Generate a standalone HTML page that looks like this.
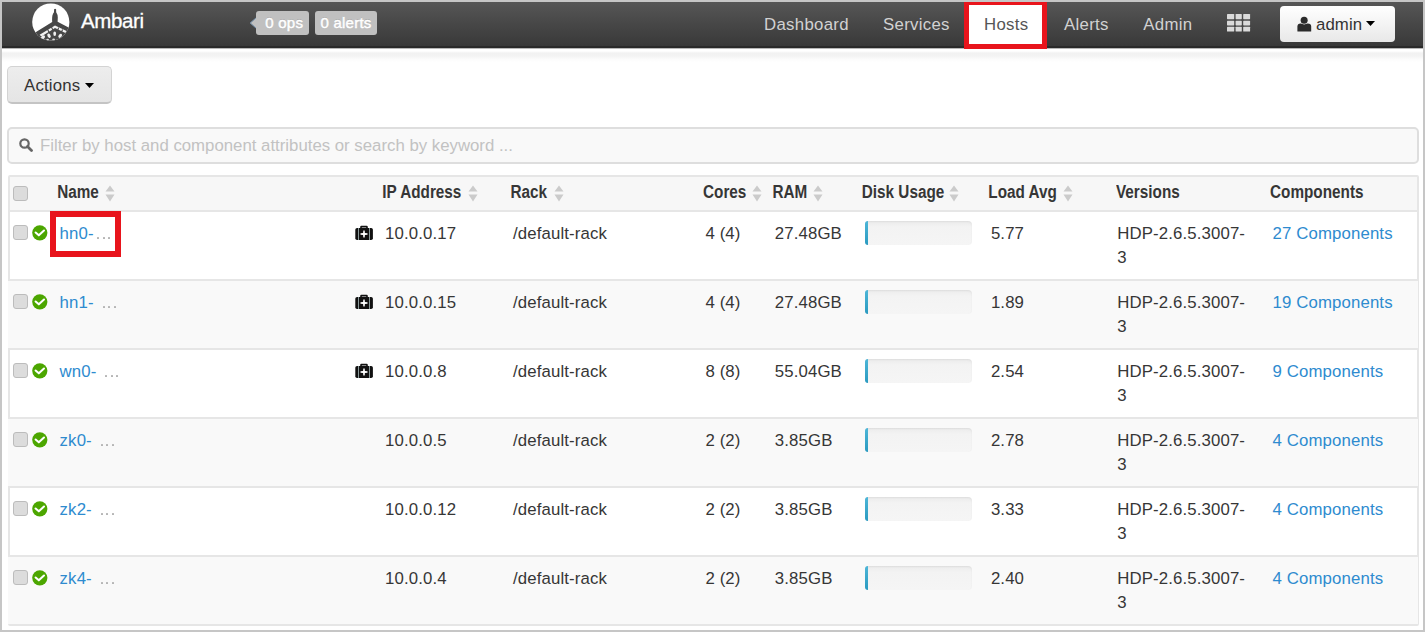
<!DOCTYPE html>
<html><head><meta charset="utf-8">
<style>
*{box-sizing:border-box;margin:0;padding:0}
html,body{width:1425px;height:632px;overflow:hidden;background:#c6c6c6;font-family:"Liberation Sans",sans-serif;}
.pg{position:absolute;left:2px;top:2px;width:1421px;height:628px;background:#fff;overflow:hidden}
.a{position:absolute;white-space:nowrap}
.nav{position:absolute;left:0;top:0;width:1421px;height:46px;background:linear-gradient(#565656,#474747 50%,#393939);border-bottom:2px solid #2a2a2a}
.shade{position:absolute;left:0;top:46px;width:1421px;height:14px;background:linear-gradient(#b8b8b8 0 1px,#fff 1px 3px,#f2f2f2 5px,#f3f3f3 8px,#fbfbfb 11px,#fff 14px)}
.navt{font-size:16.8px;color:#d2d2d2;top:13px;line-height:20px;letter-spacing:0.3px}
.badge{position:absolute;top:9px;height:24px;background:#c0c0c0;border-radius:3px;color:#fff;font-size:15px;line-height:24px;letter-spacing:0.25px;text-align:center;text-shadow:0 -1px 0 rgba(0,0,0,.15);-webkit-text-stroke:0.45px #fff}
.btn{position:absolute;border-radius:4px}
.hd{font-size:15.3px;font-weight:bold;color:#363636;top:181.8px;line-height:18px;transform:scaleY(1.14);transform-origin:0 14.06px}
.sort{position:absolute;width:10px;height:17px}
.row{position:absolute;left:6px;width:1410px;height:69px;border-top:2px solid #e6e6e6}
.row.odd{background:#f9f9f9}
.c{position:absolute;white-space:nowrap;font-size:16.8px;color:#363636;line-height:24px;top:10px;letter-spacing:0.13px}
.lnk{color:#2e8bcf}
.dot{position:absolute;top:25.4px;width:2px;height:2px;background:#b4b4b4;border-radius:0.5px}
.cb{position:absolute;left:5.2px;top:13.4px;width:15px;height:15px;border:1.5px solid #bcbcbc;background:#dcdcdc;border-radius:3px}
.ok{position:absolute;left:24.2px;top:13.2px;width:15.6px;height:15.6px}
.bar{position:absolute;left:857px;top:9px;width:107px;height:24px;border-radius:4px;background:linear-gradient(#ebebeb,#f3f3f3 25%,#f5f5f5);box-shadow:inset 0 1px 2px rgba(0,0,0,.06)}
.bar i{position:absolute;left:0;top:0;width:3.2px;height:24px;border-radius:3px 0 0 3px;background:linear-gradient(#4db6d8,#2a9ac0)}
.med{position:absolute;left:346.8px;top:13px;width:18px;height:16px}
</style></head><body>
<div class="pg">
  <div class="nav"></div>
  <div class="shade"></div>
  <!-- logo -->
  <svg class="a" style="left:26px;top:-2px" width="46" height="44" viewBox="0 0 46 44">
    <defs><clipPath id="cc"><circle cx="22.8" cy="22" r="18.6"/></clipPath></defs>
    <g clip-path="url(#cc)">
      <rect x="0" y="0" width="46" height="44" fill="#fff"/>
      <path d="M26.1 9.2 Q27.1 8.4 28.1 9.2 L28.2 12.2 Q29.7 14.2 29.8 17.6 L29.6 21.8 L46 30.3 L46 44 L0 44 L0 37 L24.2 21.9 Q23.9 18 24.4 15.4 Q25.1 13.2 26 12.2 Z" fill="#474747"/>
      <path d="M27 25.4 L38.6 31 L37.4 33 L27 28 L13.4 36.6 L11.6 34.8 Z" fill="#f2f2f2"/>
      <path d="M19.5 29.2 L21.2 32.6 M23.4 27 L25 30.3 M30.6 27.6 L29.6 30.6 M34.6 29.6 L33.4 32.2" stroke="#474747" stroke-width="1.1"/>
      <ellipse cx="15" cy="37.4" rx="1.5" ry="2.5" transform="rotate(45 15 37.4)" fill="#f0f0f0"/>
      <ellipse cx="21" cy="35.8" rx="1.5" ry="2.3" transform="rotate(-30 21 35.8)" fill="#f0f0f0"/>
      <ellipse cx="26.7" cy="33.8" rx="1.4" ry="2.3" fill="#f0f0f0"/>
      <ellipse cx="32.2" cy="35.8" rx="1.5" ry="2.3" transform="rotate(40 32.2 35.8)" fill="#f0f0f0"/>
      <ellipse cx="19.6" cy="39.8" rx="1.4" ry="1" fill="#dcdcdc"/>
      <ellipse cx="25.6" cy="39.4" rx="1.4" ry="1" fill="#dcdcdc"/>
    </g>
  </svg>
  <div class="a" style="left:79px;top:7px;font-size:20.5px;letter-spacing:-0.4px;color:#fff;line-height:24px;-webkit-text-stroke:0.3px #fff">Ambari</div>
  <svg class="a" style="left:247px;top:15px" width="8" height="12" viewBox="0 0 8 12"><path d="M8 0 L1.5 6 L8 12Z" fill="#c0c0c0"/><path d="M7.5 0.5 L1.2 6 L7.5 11.5" fill="none" stroke="#7d9ab5" stroke-width="1"/></svg><div class="badge" style="left:254px;width:53px;padding-left:3.5px">0 ops</div>
  <div class="badge" style="left:313px;width:62px">0 alerts</div>

  <div class="a navt" style="left:762px">Dashboard</div>
  <div class="a navt" style="left:881px">Services</div>
  <div class="a" style="left:962px;top:0;width:83px;height:47px;border:5px solid #e8141c;border-top-width:3px;background:#fff"></div>
  <div class="a navt" style="left:982px;color:#555">Hosts</div>
  <div class="a navt" style="left:1062px">Alerts</div>
  <div class="a navt" style="left:1141.3px">Admin</div>
  <svg class="a" style="left:1225px;top:12px" width="24" height="18" viewBox="0 0 24 18">
    <g fill="#dadada">
      <rect x="0" y="0" width="7.2" height="5.2" rx="0.6"/><rect x="8.6" y="0" width="6.2" height="5.2" rx="0.6"/><rect x="16.2" y="0" width="6.9" height="5.2" rx="0.6"/>
      <rect x="0" y="6.8" width="7.2" height="4.6" rx="0.6"/><rect x="8.6" y="6.8" width="6.2" height="4.6" rx="0.6"/><rect x="16.2" y="6.8" width="6.9" height="4.6" rx="0.6"/>
      <rect x="0" y="12.7" width="7.2" height="4.8" rx="0.6"/><rect x="8.6" y="12.7" width="6.2" height="4.8" rx="0.6"/><rect x="16.2" y="12.7" width="6.9" height="4.8" rx="0.6"/>
    </g>
  </svg>
  <div class="btn" style="left:1278px;top:4px;width:115px;height:36px;background:linear-gradient(#fff,#e8e8e8);"></div>
  <svg class="a" style="left:1295px;top:14px" width="15" height="16" viewBox="0 0 15 16">
    <path d="M0.4 15.2 L0.4 10.6 Q0.4 7.6 3.6 7.6 L10.8 7.6 Q14.2 7.6 14.2 10.6 L14.2 15.2 Q14.2 15.6 13.6 15.6 L1 15.6 Q0.4 15.6 0.4 15.2 Z" fill="#2b2b2b"/>
    <circle cx="7.15" cy="4.3" r="4.1" fill="#f0f0f0"/><circle cx="7.15" cy="4.3" r="3.5" fill="#2b2b2b"/>
  </svg>
  <div class="a" style="left:1314px;top:13px;font-size:16.8px;color:#333;line-height:20px;letter-spacing:0.1px">admin</div>
  <svg class="a" style="left:1364px;top:19px" width="9" height="5" viewBox="0 0 9 5"><path d="M0 0H9L4.5 5Z" fill="#000"/></svg>

  <!-- actions -->
  <div class="btn" style="left:5.2px;top:64.4px;width:105px;height:37.6px;border:1.6px solid #d3d3d3;border-bottom:2px solid #c4c4c4;background:linear-gradient(#ededed,#e5e5e5);border-radius:5px"></div>
  <div class="a" style="left:22px;top:73.5px;font-size:16.8px;color:#333;line-height:20px;letter-spacing:0.2px">Actions</div>
  <svg class="a" style="left:83px;top:80.5px" width="9" height="5" viewBox="0 0 9 5"><path d="M0 0H9L4.5 5Z" fill="#000"/></svg>

  <!-- filter -->
  <div class="btn" style="left:5px;top:125px;width:1412px;height:37px;border:2px solid #dedede;background:#f9f9f9;border-radius:5px"></div>
  <svg class="a" style="left:17px;top:136px" width="14" height="14" viewBox="0 0 14 14">
    <circle cx="5.5" cy="5.5" r="4.2" fill="none" stroke="#666" stroke-width="2.2"/>
    <path d="M8.5 8.5 L12.5 12.5" stroke="#666" stroke-width="2.8" stroke-linecap="round"/>
  </svg>
  <div class="a" style="left:38px;top:134px;font-size:16.8px;color:#c2c2c2;line-height:20px">Filter by host and component attributes or search by keyword ...</div>

  <!-- table -->
  <div class="a" style="left:5.5px;top:173px;width:1411.5px;height:451px;border:2px solid #e6e6e6;border-radius:2px;background:#fff"></div>
  <div class="a" style="left:8px;top:175px;width:1407px;height:33px;background:#f7f7f7"></div>
  <div class="a" style="left:8px;top:208px;width:1407px;height:2px;background:#e6e6e6"></div>
  <div class="cb" style="left:11px;top:184px"></div>
  <div class="a hd" style="left:55.2px">Name</div>
  <div class="a hd" style="left:380.3px">IP Address</div>
  <div class="a hd" style="left:508.4px">Rack</div>
  <div class="a hd" style="left:701px">Cores</div>
  <div class="a hd" style="left:770.4px">RAM</div>
  <div class="a hd" style="left:859.8px">Disk Usage</div>
  <div class="a hd" style="left:986.3px">Load Avg</div>
  <div class="a hd" style="left:1114px">Versions</div>
  <div class="a hd" style="left:1268px">Components</div>
  <!-- sort icons -->
  <svg class="sort" style="left:103px;top:182.6px" viewBox="0 0 10 17"><path d="M5 0.5 L9.5 6.5 H0.5Z M5 16.5 L9.5 9.5 H0.5Z" fill="#cbcbcb"/></svg>
  <svg class="sort" style="left:465.7px;top:182.6px" viewBox="0 0 10 17"><path d="M5 0.5 L9.5 6.5 H0.5Z M5 16.5 L9.5 9.5 H0.5Z" fill="#cbcbcb"/></svg>
  <svg class="sort" style="left:551.6px;top:182.6px" viewBox="0 0 10 17"><path d="M5 0.5 L9.5 6.5 H0.5Z M5 16.5 L9.5 9.5 H0.5Z" fill="#cbcbcb"/></svg>
  <svg class="sort" style="left:749.7px;top:182.6px" viewBox="0 0 10 17"><path d="M5 0.5 L9.5 6.5 H0.5Z M5 16.5 L9.5 9.5 H0.5Z" fill="#cbcbcb"/></svg>
  <svg class="sort" style="left:811px;top:182.6px" viewBox="0 0 10 17"><path d="M5 0.5 L9.5 6.5 H0.5Z M5 16.5 L9.5 9.5 H0.5Z" fill="#cbcbcb"/></svg>
  <svg class="sort" style="left:947px;top:182.6px" viewBox="0 0 10 17"><path d="M5 0.5 L9.5 6.5 H0.5Z M5 16.5 L9.5 9.5 H0.5Z" fill="#cbcbcb"/></svg>
  <svg class="sort" style="left:1061px;top:182.6px" viewBox="0 0 10 17"><path d="M5 0.5 L9.5 6.5 H0.5Z M5 16.5 L9.5 9.5 H0.5Z" fill="#cbcbcb"/></svg>

  <div class="row" style="top:208px;border-top-color:transparent;"><div class="cb"></div><svg class="ok" viewBox="0 0 16 16"><circle cx="8" cy="8" r="7.8" fill="#4ca600"/><path d="M3.7 7.7 L7 10.6 L12.3 5.7" fill="none" stroke="#fff" stroke-width="2.1" stroke-linecap="round" stroke-linejoin="round"/></svg><div class="c lnk" style="left:51.6px">hn0-</div><i class="dot" style="left:89.2px"></i><i class="dot" style="left:94.6px"></i><i class="dot" style="left:100.0px"></i><svg class="med" viewBox="0 0 18 16"><path d="M5.2 3.2 V2 Q5.2 0.8 6.4 0.8 H11.6 Q12.8 0.8 12.8 2 V3.2 H11.2 V2.4 H6.8 V3.2 Z" fill="#111"/><rect x="0.3" y="3" width="17.6" height="12" rx="1.8" fill="#111"/><rect x="3.1" y="3" width="0.9" height="12" fill="#9aa"/><rect x="14" y="3" width="0.9" height="12" fill="#9aa"/><path d="M8.3 5.6 H9.7 L9.9 8.1 L12.5 8.3 V9.7 L9.9 9.9 L9.7 12.4 H8.3 L8.1 9.9 L5.5 9.7 V8.3 L8.1 8.1 Z" fill="#fff"/></svg><div class="c" style="left:377px">10.0.0.17</div><div class="c" style="left:505px">/default-rack</div><div class="c" style="left:697.4px">4 (4)</div><div class="c" style="left:766.8px">27.48GB</div><div class="bar"><i></i></div><div class="c" style="left:982.9px">5.77</div><div class="c" style="left:1109.2px">HDP-2.6.5.3007-<br>3</div><div class="c lnk" style="left:1264.5px">27 Components</div></div>
  <div class="row odd" style="top:277px;"><div class="cb"></div><svg class="ok" viewBox="0 0 16 16"><circle cx="8" cy="8" r="7.8" fill="#4ca600"/><path d="M3.7 7.7 L7 10.6 L12.3 5.7" fill="none" stroke="#fff" stroke-width="2.1" stroke-linecap="round" stroke-linejoin="round"/></svg><div class="c lnk" style="left:51.6px">hn1-</div><i class="dot" style="left:94.8px"></i><i class="dot" style="left:100.1px"></i><i class="dot" style="left:105.5px"></i><svg class="med" viewBox="0 0 18 16"><path d="M5.2 3.2 V2 Q5.2 0.8 6.4 0.8 H11.6 Q12.8 0.8 12.8 2 V3.2 H11.2 V2.4 H6.8 V3.2 Z" fill="#111"/><rect x="0.3" y="3" width="17.6" height="12" rx="1.8" fill="#111"/><rect x="3.1" y="3" width="0.9" height="12" fill="#9aa"/><rect x="14" y="3" width="0.9" height="12" fill="#9aa"/><path d="M8.3 5.6 H9.7 L9.9 8.1 L12.5 8.3 V9.7 L9.9 9.9 L9.7 12.4 H8.3 L8.1 9.9 L5.5 9.7 V8.3 L8.1 8.1 Z" fill="#fff"/></svg><div class="c" style="left:377px">10.0.0.15</div><div class="c" style="left:505px">/default-rack</div><div class="c" style="left:697.4px">4 (4)</div><div class="c" style="left:766.8px">27.48GB</div><div class="bar"><i></i></div><div class="c" style="left:982.9px">1.89</div><div class="c" style="left:1109.2px">HDP-2.6.5.3007-<br>3</div><div class="c lnk" style="left:1264.5px">19 Components</div></div>
  <div class="row" style="top:346px;"><div class="cb"></div><svg class="ok" viewBox="0 0 16 16"><circle cx="8" cy="8" r="7.8" fill="#4ca600"/><path d="M3.7 7.7 L7 10.6 L12.3 5.7" fill="none" stroke="#fff" stroke-width="2.1" stroke-linecap="round" stroke-linejoin="round"/></svg><div class="c lnk" style="left:51.6px">wn0-</div><i class="dot" style="left:97.3px"></i><i class="dot" style="left:102.8px"></i><i class="dot" style="left:108.3px"></i><svg class="med" viewBox="0 0 18 16"><path d="M5.2 3.2 V2 Q5.2 0.8 6.4 0.8 H11.6 Q12.8 0.8 12.8 2 V3.2 H11.2 V2.4 H6.8 V3.2 Z" fill="#111"/><rect x="0.3" y="3" width="17.6" height="12" rx="1.8" fill="#111"/><rect x="3.1" y="3" width="0.9" height="12" fill="#9aa"/><rect x="14" y="3" width="0.9" height="12" fill="#9aa"/><path d="M8.3 5.6 H9.7 L9.9 8.1 L12.5 8.3 V9.7 L9.9 9.9 L9.7 12.4 H8.3 L8.1 9.9 L5.5 9.7 V8.3 L8.1 8.1 Z" fill="#fff"/></svg><div class="c" style="left:377px">10.0.0.8</div><div class="c" style="left:505px">/default-rack</div><div class="c" style="left:697.4px">8 (8)</div><div class="c" style="left:766.8px">55.04GB</div><div class="bar"><i></i></div><div class="c" style="left:982.9px">2.54</div><div class="c" style="left:1109.2px">HDP-2.6.5.3007-<br>3</div><div class="c lnk" style="left:1264.5px">9 Components</div></div>
  <div class="row odd" style="top:415px;"><div class="cb"></div><svg class="ok" viewBox="0 0 16 16"><circle cx="8" cy="8" r="7.8" fill="#4ca600"/><path d="M3.7 7.7 L7 10.6 L12.3 5.7" fill="none" stroke="#fff" stroke-width="2.1" stroke-linecap="round" stroke-linejoin="round"/></svg><div class="c lnk" style="left:51.6px">zk0-</div><i class="dot" style="left:92.9px"></i><i class="dot" style="left:98.3px"></i><i class="dot" style="left:103.7px"></i><div class="c" style="left:377px">10.0.0.5</div><div class="c" style="left:505px">/default-rack</div><div class="c" style="left:697.4px">2 (2)</div><div class="c" style="left:766.8px">3.85GB</div><div class="bar"><i></i></div><div class="c" style="left:982.9px">2.78</div><div class="c" style="left:1109.2px">HDP-2.6.5.3007-<br>3</div><div class="c lnk" style="left:1264.5px">4 Components</div></div>
  <div class="row" style="top:484px;"><div class="cb"></div><svg class="ok" viewBox="0 0 16 16"><circle cx="8" cy="8" r="7.8" fill="#4ca600"/><path d="M3.7 7.7 L7 10.6 L12.3 5.7" fill="none" stroke="#fff" stroke-width="2.1" stroke-linecap="round" stroke-linejoin="round"/></svg><div class="c lnk" style="left:51.6px">zk2-</div><i class="dot" style="left:92.8px"></i><i class="dot" style="left:98.3px"></i><i class="dot" style="left:103.7px"></i><div class="c" style="left:377px">10.0.0.12</div><div class="c" style="left:505px">/default-rack</div><div class="c" style="left:697.4px">2 (2)</div><div class="c" style="left:766.8px">3.85GB</div><div class="bar"><i></i></div><div class="c" style="left:982.9px">3.33</div><div class="c" style="left:1109.2px">HDP-2.6.5.3007-<br>3</div><div class="c lnk" style="left:1264.5px">4 Components</div></div>
  <div class="row odd" style="top:553px;"><div class="cb"></div><svg class="ok" viewBox="0 0 16 16"><circle cx="8" cy="8" r="7.8" fill="#4ca600"/><path d="M3.7 7.7 L7 10.6 L12.3 5.7" fill="none" stroke="#fff" stroke-width="2.1" stroke-linecap="round" stroke-linejoin="round"/></svg><div class="c lnk" style="left:51.6px">zk4-</div><i class="dot" style="left:92.9px"></i><i class="dot" style="left:98.3px"></i><i class="dot" style="left:103.7px"></i><div class="c" style="left:377px">10.0.0.4</div><div class="c" style="left:505px">/default-rack</div><div class="c" style="left:697.4px">2 (2)</div><div class="c" style="left:766.8px">3.85GB</div><div class="bar"><i></i></div><div class="c" style="left:982.9px">2.40</div><div class="c" style="left:1109.2px">HDP-2.6.5.3007-<br>3</div><div class="c lnk" style="left:1264.5px">4 Components</div></div>
  <div class="a" style="left:48.3px;top:209px;width:70.6px;height:46.3px;border:6.2px solid #e8141c"></div>
</div>
</body></html>
